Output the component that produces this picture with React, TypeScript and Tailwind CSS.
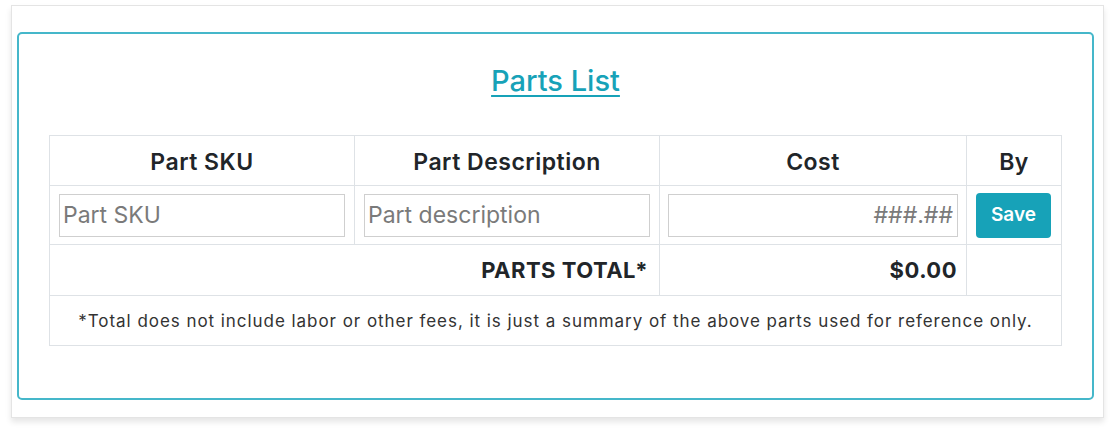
const columns = [
  { label: 'Part SKU', width: 'w-[305px]' },
  { label: 'Part Description', width: 'w-[305px]' },
  { label: 'Cost', width: 'w-[307px]' },
  { label: 'By', width: 'w-[95px]' },
];

export default function App() {
  return (
    <div className="w-[1110px] h-[430px] bg-white pl-[11px] pt-[5px] font-['Inter','Liberation_Sans',sans-serif]">
      {/* Outer card */}
      <div className="w-[1093px] h-[413px] bg-white border border-[#e4e4e4] shadow-[0_4px_6px_rgba(0,0,0,0.1)] pl-[5px] pt-[26px]">
        {/* Teal panel */}
        <div className="w-[1077px] h-[368px] rounded-[5px] border-2 border-[#45b7ca] pt-[29px]">
          <h2 className="text-center text-[29px] leading-[36px] font-medium text-[#17a2b8] underline decoration-2 underline-offset-[4px]">
            Parts List
          </h2>

          <table className="mt-[36px] mx-auto w-[1012px] table-fixed border-collapse text-[#212529]">
            <thead>
              <tr className="h-[50px]">
                {columns.map((col) => (
                  <th
                    key={col.label}
                    className={`${col.width} border border-[#dee2e6] pt-[3px] text-center text-[23px] tracking-[0.5px] font-semibold`}
                  >
                    {col.label}
                  </th>
                ))}
              </tr>
            </thead>
            <tbody>
              <tr className="h-[59px]">
                <td className="border border-[#dee2e6] px-[9px]">
                  <input
                    placeholder="Part SKU"
                    className="w-full h-[43px] border border-[#cfcfcf] px-[3px] text-[23px] placeholder:text-[#7a7a7a] outline-none"
                  />
                </td>
                <td className="border border-[#dee2e6] px-[9px]">
                  <input
                    placeholder="Part description"
                    className="w-full h-[43px] border border-[#cfcfcf] px-[3px] text-[23px] placeholder:text-[#7a7a7a] outline-none"
                  />
                </td>
                <td className="border border-[#dee2e6] px-[8px]">
                  <input
                    placeholder="###.##"
                    className="w-full h-[43px] border border-[#cfcfcf] px-[4px] text-right text-[23px] placeholder:text-[#7a7a7a] outline-none"
                  />
                </td>
                <td className="border border-[#dee2e6] pl-[9px] pr-[10px]">
                  <button className="w-[75px] h-[45px] rounded-[4px] bg-[#17a2b8] text-white text-[19px] font-semibold">
                    Save
                  </button>
                </td>
              </tr>
              <tr className="h-[51px]">
                <td colSpan={2} className="border border-[#dee2e6] pr-[11px] text-right text-[22px] tracking-[0.5px] font-bold">
                  PARTS TOTAL*
                </td>
                <td className="border border-[#dee2e6] pr-[9px] text-right text-[22px] tracking-[0.5px] font-bold">$0.00</td>
                <td className="border border-[#dee2e6]" />
              </tr>
              <tr className="h-[50px]">
                <td colSpan={4} className="border border-[#dee2e6] pt-[3px] text-center text-[17px] tracking-[0.95px] text-[#333]">
                  *Total does not include labor or other fees, it is just a summary of the above parts used for reference only.
                </td>
              </tr>
            </tbody>
          </table>
        </div>
      </div>
    </div>
  );
}
